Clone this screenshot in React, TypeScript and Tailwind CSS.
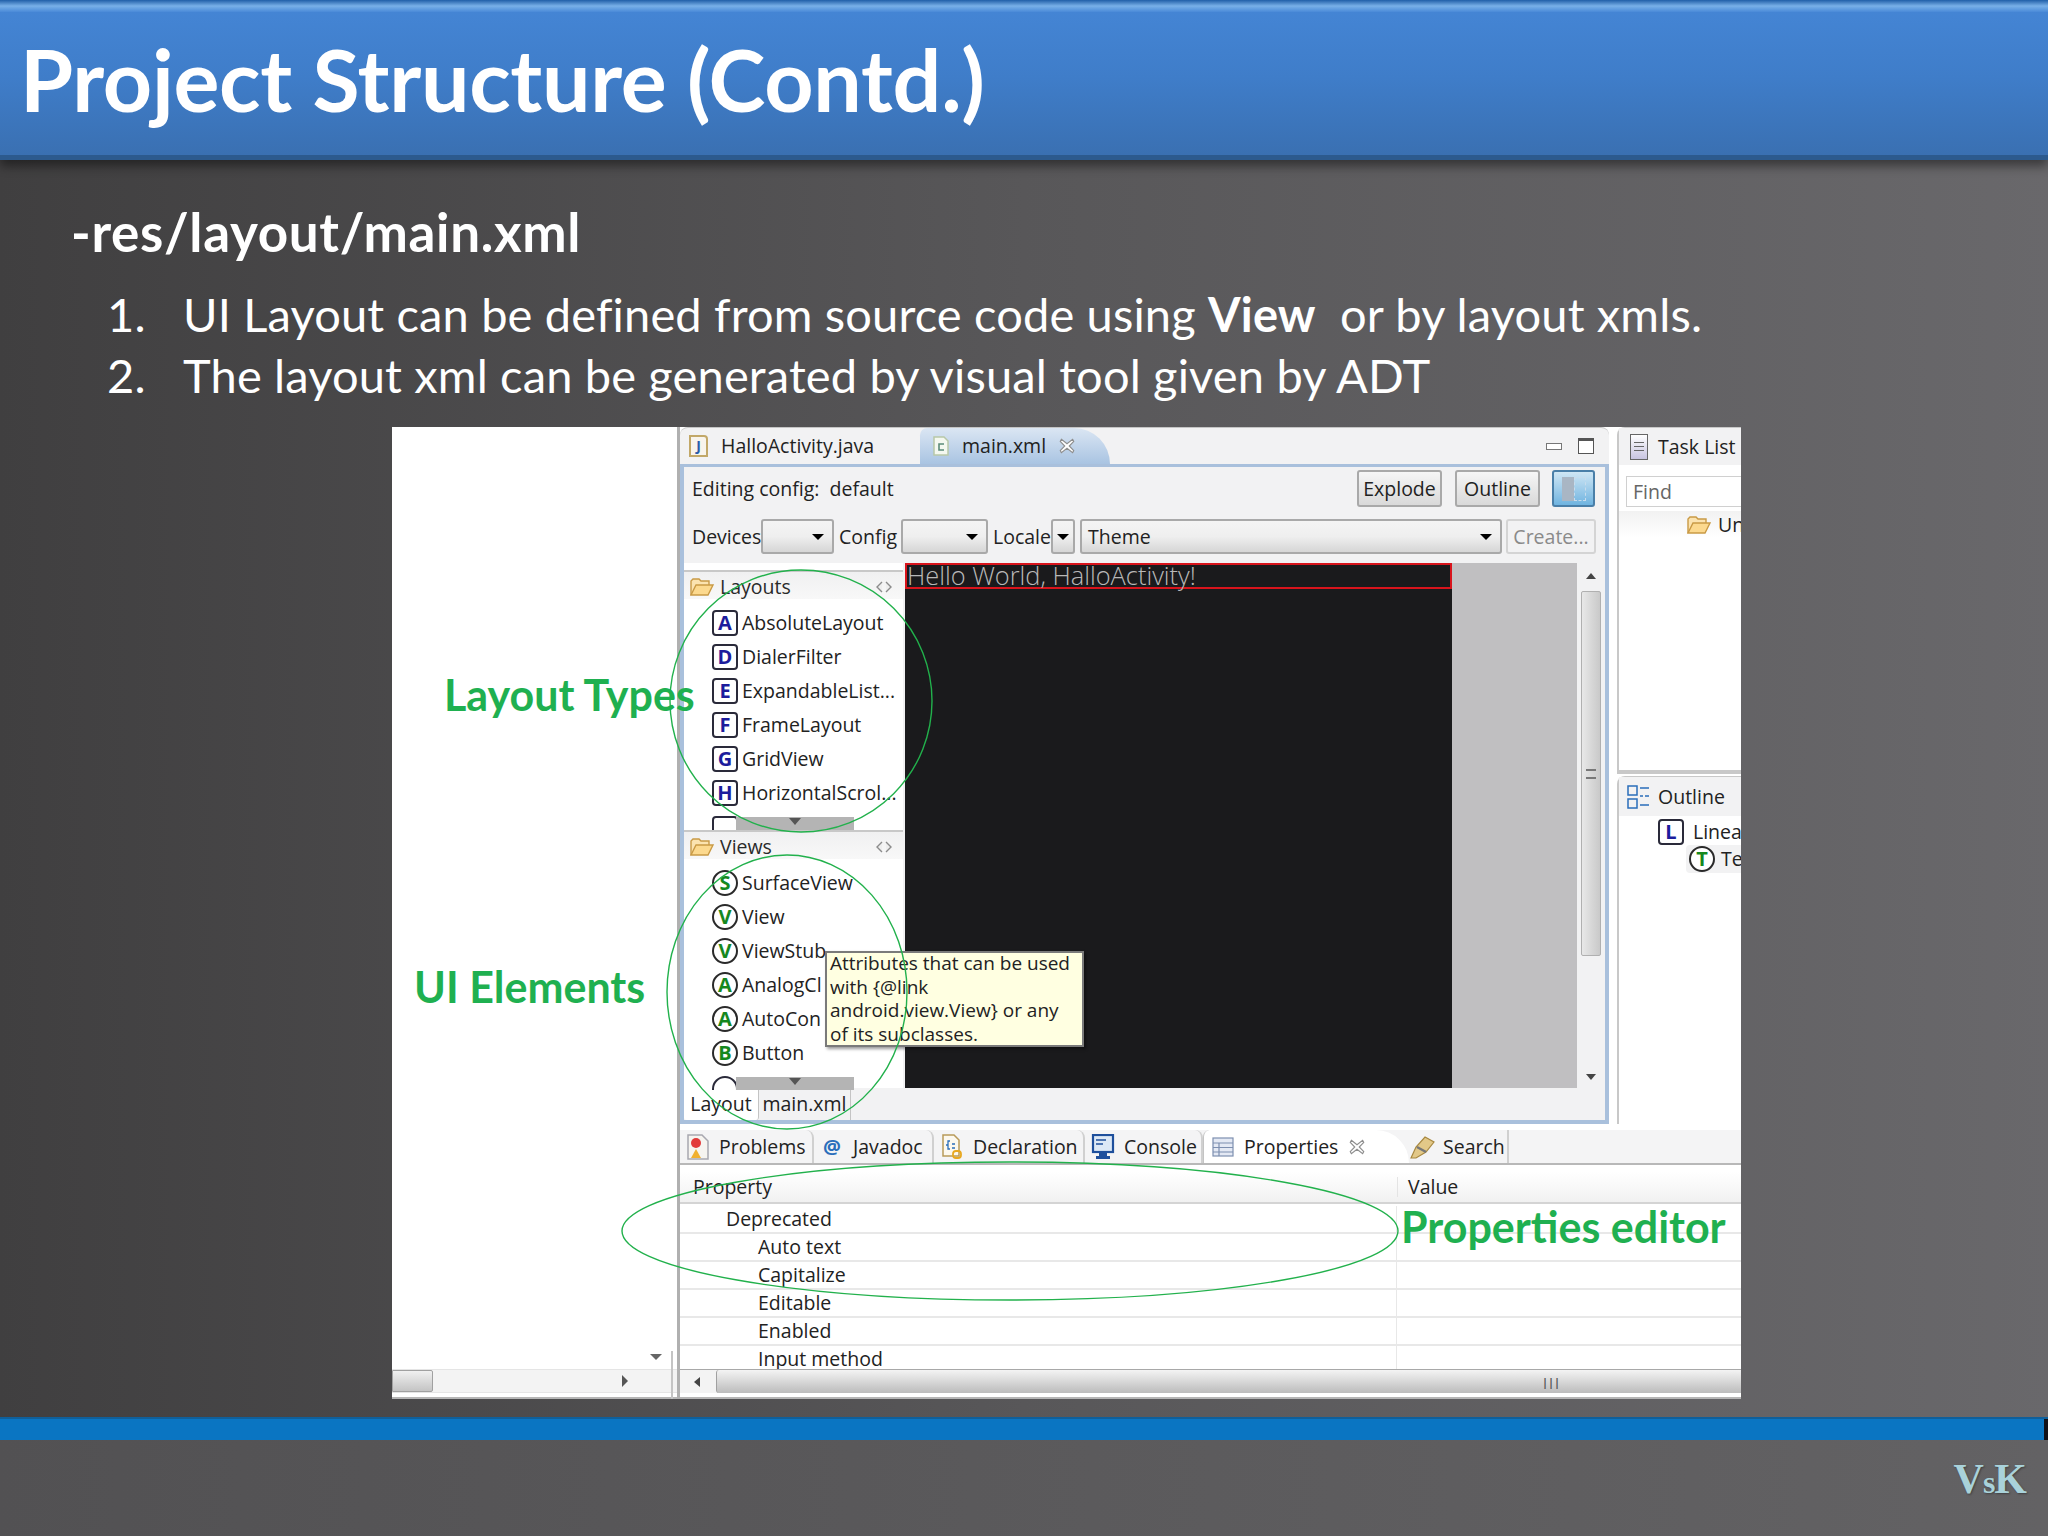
import type { ReactNode } from 'react';

const layoutItems = [
    ['A', 'AbsoluteLayout'],
    ['D', 'DialerFilter'],
    ['E', 'ExpandableList...'],
    ['F', 'FrameLayout'],
    ['G', 'GridView'],
    ['H', 'HorizontalScrol...'],
];

const viewItems = [
    ['S', 'SurfaceView'],
    ['V', 'View'],
    ['V', 'ViewStub'],
    ['A', 'AnalogCl'],
    ['A', 'AutoCon'],
    ['B', 'Button'],
];

const propertyRows = [
    ['Deprecated', 'pl-[46px]'],
    ['Auto text', 'pl-[78px]'],
    ['Capitalize', 'pl-[78px]'],
    ['Editable', 'pl-[78px]'],
    ['Enabled', 'pl-[78px]'],
    ['Input method', 'pl-[78px]'],
];

function FolderIcon() {
    return (
        <svg width="26" height="20" viewBox="0 0 26 20" className="shrink-0">
            <path d="M2 18V4l2-2h6l2 2h8v4" fill="#fbe3b0" stroke="#c99a45" strokeWidth="1.4" />
            <path d="M2 18l5-10h17l-5 10z" fill="#fcd98e" stroke="#c99a45" strokeWidth="1.4" />
        </svg>
    );
}

function ArrowsIcon() {
    return (
        <svg width="18" height="14" viewBox="0 0 18 14" className="ml-auto mr-[10px] shrink-0">
            <path d="M7 2L2 7l5 5M11 2l5 5-5 5" fill="#eee" stroke="#8b8b8b" strokeWidth="1.4" />
        </svg>
    );
}

function JavaIcon() {
    return (
        <span className="flex h-[22px] w-[19px] shrink-0 items-center justify-center rounded-tr-[4px] border-2 border-[#c2a868] bg-[#f8f4ec] text-[14px] font-bold leading-none text-[#2a5ca8]">
            J
        </span>
    );
}

function XmlIcon() {
    return (
        <svg width="18" height="20" viewBox="0 0 18 20" className="shrink-0" fill="none">
            <path d="M2 1h10l4 4v14H2z" stroke="#b8c8a8" strokeWidth="1.5" fill="#f4f8f0" />
            <path d="M12 8H7v6h5" stroke="#5a8a78" strokeWidth="1.6" />
        </svg>
    );
}

function CloseIcon() {
    return (
        <svg width="18" height="18" viewBox="0 0 16 16" className="shrink-0">
            <path d="M3 2l5 4 5-4 1 2-4 4 4 4-1 2-5-4-5 4-1-2 4-4-4-4z" fill="#fff" stroke="#8e8e8e" strokeWidth="1" />
        </svg>
    );
}

function SquareBadge({ letter }: { letter: string }) {
    return (
        <span className="flex h-[26px] w-[26px] shrink-0 items-center justify-center rounded-[4px] border-2 border-[#2a2a3a] bg-white text-[20px] font-bold leading-none text-[#1c1c9c]">
            {letter}
        </span>
    );
}

function CircleBadge({ letter }: { letter: string }) {
    return (
        <span className="flex h-[26px] w-[26px] shrink-0 items-center justify-center rounded-full border-2 border-[#2a2a2a] bg-white text-[20px] font-bold leading-none text-[#16881e]">
            {letter}
        </span>
    );
}

function PaletteHeader({ label }: { label: string }) {
    return (
        <div className="flex h-[29px] shrink-0 items-center gap-[5px] border-t-2 border-[#c8c8c8] bg-gradient-to-b from-[#f0f0f1] to-[#f8f8f8] pl-[5px] pt-[2px]">
            <FolderIcon />
            <span className="text-[#2a2a2a]">{label}</span>
            <ArrowsIcon />
        </div>
    );
}

function PaletteList({ items, badge }: { items: string[][]; badge: 'square' | 'circle' }) {
    return (
        <div className="flex flex-col pt-[7px]">
            {items.map(([letter, name]) => (
                <div key={name} className="flex h-[34px] shrink-0 items-center gap-[4px] pl-[28px]">
                    {badge === 'square' ? <SquareBadge letter={letter} /> : <CircleBadge letter={letter} />}
                    <span className="whitespace-nowrap text-[#222]">{name}</span>
                </div>
            ))}
        </div>
    );
}

function CutRow({ circle }: { circle?: boolean }) {
    return (
        <div className="relative h-[20px] shrink-0 overflow-hidden pl-[28px]">
            <span className={`mt-[6px] block h-[26px] w-[26px] border-2 border-[#2a2a3a] bg-white ${circle ? 'rounded-full' : 'rounded-[4px]'}`} />
            <span className="absolute left-[52px] top-[7px] flex h-[13px] w-[118px] justify-center bg-[#b4b4b4]">
                <span className="mt-[1px] h-0 w-0 border-x-[6px] border-t-[7px] border-x-transparent border-t-[#555]" />
            </span>
        </div>
    );
}

function Combo({ className, children }: { className: string; children?: ReactNode }) {
    return (
        <div className={`flex h-[35px] shrink-0 items-center justify-between rounded-[3px] border-2 border-[#a9a9a9] bg-gradient-to-b from-[#f4f4f4] via-[#efefef] to-[#d6d6d6] pl-[6px] pr-[8px] ${className}`}>
            <span>{children}</span>
            <span className="h-0 w-0 border-x-[6px] border-t-[6px] border-x-transparent border-t-black" />
        </div>
    );
}

function ToolButton({ label, className }: { label: string; className: string }) {
    return (
        <div className={`flex h-[37px] items-center justify-center rounded-[3px] border-2 border-[#a9a9a9] bg-gradient-to-b from-[#f6f6f6] to-[#d9d9d9] ${className}`}>
            {label}
        </div>
    );
}

function BottomTab({ label, icon, className }: { label: string; icon: ReactNode; className: string }) {
    return (
        <div className={`flex h-full shrink-0 items-center gap-[9px] rounded-t-[8px] border-r-2 border-[#d0d0d0] pl-[6px] ${className}`}>
            <span className="flex w-[24px] shrink-0 justify-center">{icon}</span>
            <span>{label}</span>
        </div>
    );
}

function Annotations() {
    return (
        <svg width="1345" height="972" className="pointer-events-none absolute left-0 top-0" fill="none" stroke="#22b14c" strokeWidth="1.4">
            <ellipse cx="409" cy="274" rx="131" ry="131" />
            <ellipse cx="395" cy="565" rx="120" ry="137" />
            <ellipse cx="618" cy="804" rx="388" ry="69" />
        </svg>
    );
}

function GreenLabel({ className, children }: { className: string; children: ReactNode }) {
    return (
        <span className={`absolute whitespace-nowrap font-['Lato',sans-serif] text-[43px] font-bold leading-none text-[#1fb050] ${className}`}>
            {children}
        </span>
    );
}

export default function App() {
    return (
        <div className="relative flex h-[1536px] w-[2048px] flex-col overflow-hidden bg-gradient-to-r from-[#403f40] via-[#585759] to-[#69686b] font-['Lato',sans-serif] text-white">
            <header className="relative flex h-[160px] shrink-0 items-center border-b-[5px] border-[#2c5a8e] bg-gradient-to-b from-[#4586d6] via-[#3f7dc9] to-[#3a70b2] pl-[20px] pt-[2px] shadow-[0_6px_10px_rgba(0,0,0,0.45)]">
                <div className="absolute left-0 top-0 h-[12px] w-full bg-gradient-to-b from-[#1f5fa8] via-[#78b0e8] to-[#4a8ad8]" />
                <h1 className="whitespace-nowrap text-[86px] font-bold leading-none tracking-[-0.3px]">Project Structure (Contd.)</h1>
            </header>

            <section className="flex flex-1 flex-col pl-[71px] pt-[42px]">
                <div className="whitespace-nowrap text-[53px] font-bold leading-[60px] tracking-[0.65px]">-res/layout/main.xml</div>
                <ol className="mt-[27px] flex flex-col gap-[10px] pl-[36px] text-[47px] leading-[51px] tracking-[0.15px]">
                    <li className="flex whitespace-nowrap">
                        <span className="w-[76px]">1.</span>
                        <span>UI Layout can be defined from source code using <b>View</b>&nbsp; or by layout xmls.</span>
                    </li>
                    <li className="flex whitespace-nowrap">
                        <span className="w-[76px]">2.</span>
                        <span>The layout xml can be generated by visual tool given by ADT</span>
                    </li>
                </ol>

                <div className="relative ml-[321px] mt-[26px] flex h-[972px] w-[1349px] overflow-hidden bg-white font-['Open_Sans',sans-serif] text-[19.5px] leading-none text-[#222]">
                    <div className="relative flex w-[285px] shrink-0 flex-col justify-end">
                        <div className="flex h-[24px] justify-between border-y border-[#e5e5e5] bg-[#f3f3f3] pr-[49px]">
                            <span className="h-full w-[41px] rounded-r-[2px] border border-[#a0a0a0] bg-gradient-to-b from-[#f0f0f0] to-[#c4c4c4]" />
                            <span className="mt-[5px] h-0 w-0 border-y-[6px] border-l-[6px] border-y-transparent border-l-[#555]" />
                        </div>
                        <div className="h-[6px] border-b-2 border-[#b5b5b5]" />
                        <span className="absolute bottom-0 right-[4px] h-[48px] w-[2px] bg-[#c4c4c4]" />
                    </div>

                    <div className="flex flex-1 flex-col border-l-[3px] border-[#b0b0b0]">
                        <div className="flex h-[697px] shrink-0">
                            <div className="flex w-[929px] shrink-0 flex-col">
                                <div className="flex h-[37px] shrink-0 items-center rounded-t-[8px] border-t border-[#c4c4c4] bg-[#f2f2f3]">
                                    <div className="flex h-full w-[240px] items-center gap-[13px] pl-[9px]">
                                        <JavaIcon />
                                        <span>HalloActivity.java</span>
                                    </div>
                                    <div className="flex h-full w-[190px] items-center gap-[12px] rounded-tl-[8px] rounded-tr-[40px] bg-gradient-to-b from-[#dbe6f3] to-[#a9c4e2] pl-[12px]">
                                        <XmlIcon />
                                        <span>main.xml</span>
                                        <CloseIcon />
                                    </div>
                                    <span className="ml-auto h-[7px] w-[16px] border border-[#777] bg-white" />
                                    <span className="ml-[16px] mr-[15px] h-[16px] w-[16px] border border-[#555] border-t-[3px] bg-white" />
                                </div>

                                <div className="flex flex-1 flex-col overflow-hidden border-x-4 border-b-4 border-t-[3px] border-[#a9c0dc] bg-[#f2f2f3]">
                                    <div className="flex h-[43px] shrink-0 items-center pl-[8px] pr-[10px]">
                                        <span>Editing config:&nbsp; default</span>
                                        <ToolButton label="Explode" className="ml-auto w-[85px]" />
                                        <ToolButton label="Outline" className="ml-[13px] w-[85px]" />
                                        <div className="ml-[12px] flex h-[37px] w-[43px] items-center justify-center rounded-[3px] border-2 border-[#4a7fa8] bg-gradient-to-b from-[#cfe6f4] to-[#6fb4e0]">
                                            <span className="h-[24px] w-[12px] bg-[#a9b6c4]" />
                                            <span className="h-[24px] w-[12px] border border-dashed border-[#c9dcec]" />
                                        </div>
                                    </div>
                                    <div className="flex h-[53px] shrink-0 items-center pl-[8px]">
                                        <span className="w-[69px]">Devices</span>
                                        <Combo className="w-[73px]" />
                                        <span className="ml-[5px] w-[62px]">Config</span>
                                        <Combo className="w-[87px]" />
                                        <span className="ml-[5px] w-[58px]">Locale</span>
                                        <Combo className="w-[24px] !px-[4px]" />
                                        <Combo className="ml-[5px] w-[422px]">Theme</Combo>
                                        <div className="ml-[4px] flex h-[35px] w-[90px] items-center justify-center rounded-[3px] border-2 border-[#d4d4d4] text-[#8a8a8a]">Create...</div>
                                    </div>
                                    <div className="flex min-h-0 flex-1">
                                        <div className="flex w-[219px] shrink-0 flex-col bg-white pt-[7px]">
                                            <PaletteHeader label="Layouts" />
                                            <PaletteList items={layoutItems} badge="square" />
                                            <CutRow />
                                            <PaletteHeader label="Views" />
                                            <PaletteList items={viewItems} badge="circle" />
                                            <CutRow circle />
                                        </div>
                                        <div className="ml-[2px] w-[547px] shrink-0 bg-[#1a1a1c]">
                                            <div className="flex h-[26px] items-center whitespace-nowrap border-2 border-[#d8141c] text-[25.4px] font-light text-[#b8b8b8]">Hello World, HalloActivity!</div>
                                        </div>
                                        <div className="w-[125px] shrink-0 bg-[#c0bfc1]" />
                                        <div className="relative flex w-[27px] shrink-0 flex-col items-center bg-[#f2f2f3] pt-[10px]">
                                            <span className="h-0 w-0 border-x-[5px] border-b-[6px] border-x-transparent border-b-[#444]" />
                                            <div className="mt-[12px] flex h-[365px] w-[20px] items-center justify-center rounded-[2px] border border-[#b0b0b0] bg-gradient-to-r from-[#e8e8e8] to-[#c9c9c9]">
                                                <span className="h-[10px] w-[10px] border-y-2 border-[#777]" />
                                            </div>
                                            <span className="mb-[8px] mt-auto h-0 w-0 border-x-[5px] border-t-[6px] border-x-transparent border-t-[#444]" />
                                        </div>
                                    </div>
                                    <div className="flex h-[32px] shrink-0 bg-[#f2f2f3]">
                                        <div className="flex h-full w-[75px] items-center justify-center rounded-b-[3px] border-r border-[#c4c4c4] bg-white">Layout</div>
                                        <div className="flex h-full w-[92px] items-center justify-center border-r border-[#c4c4c4]">main.xml</div>
                                    </div>
                                </div>
                            </div>

                            <div className="ml-[8px] flex min-w-0 flex-1 flex-col overflow-hidden">
                                <div className="flex h-[347px] shrink-0 flex-col rounded-tl-[8px] border-b-[4px] border-l-2 border-t border-[#c8c8c8]">
                                    <div className="flex h-[37px] shrink-0 items-center gap-[10px] whitespace-nowrap bg-[#f2f2f3] pl-[11px]">
                                        <span className="flex h-[26px] w-[18px] shrink-0 flex-col justify-center gap-[3px] border border-[#666] bg-gradient-to-b from-white to-[#c8c4e0] px-[3px]">
                                            <span className="h-[1px] bg-[#666]" />
                                            <span className="h-[1px] bg-[#666]" />
                                            <span className="h-[1px] bg-[#666]" />
                                        </span>
                                        <span>Task List</span>
                                    </div>
                                    <div className="ml-[7px] mt-[11px] flex h-[31px] items-center border border-r-0 border-[#d0d0d0] pl-[6px] text-[#666]">Find</div>
                                    <div className="mt-[4px] flex h-[27px] items-center gap-[6px] whitespace-nowrap bg-gradient-to-b from-[#f2f2f2] to-white pl-[67px]">
                                        <FolderIcon />
                                        <span>Un</span>
                                    </div>
                                </div>
                                <div className="mt-[2px] flex flex-1 flex-col rounded-tl-[8px] border-l-2 border-t border-[#c8c8c8]">
                                    <div className="flex h-[39px] shrink-0 items-center gap-[7px] whitespace-nowrap bg-[#f2f2f3] pl-[8px]">
                                        <svg width="24" height="24" viewBox="0 0 24 24" className="shrink-0" fill="none" stroke="#2a6ebb" strokeWidth="1.5">
                                            <rect x="1" y="1" width="9" height="9" />
                                            <rect x="1" y="14" width="9" height="9" />
                                            <path d="M13 3h9M13 11h3M18 11h4M13 20h9" />
                                        </svg>
                                        <span>Outline</span>
                                    </div>
                                    <div className="flex h-[29px] items-center gap-[9px] whitespace-nowrap pl-[39px] pt-[2px]">
                                        <SquareBadge letter="L" />
                                        <span>Linea</span>
                                    </div>
                                    <div className="ml-[67px] flex h-[28px] items-center gap-[6px] whitespace-nowrap rounded-l-[4px] bg-[#f2f2f3] pl-[3px]">
                                        <CircleBadge letter="T" />
                                        <span>Te</span>
                                    </div>
                                </div>
                            </div>
                        </div>

                        <div className="mt-[6px] flex min-h-0 flex-1 flex-col">
                            <div className="flex h-[35px] shrink-0 items-center border-b-[2px] border-[#b8b8b8] bg-[#f4f4f5]">
                                <BottomTab
                                    label="Problems"
                                    className="w-[134px]"
                                    icon={
                                        <svg width="22" height="26" viewBox="0 0 22 26" fill="none">
                                            <path d="M1 1h14l6 6v18H1z" fill="#f6f4f0" stroke="#a8a8b0" strokeWidth="1.5" />
                                            <circle cx="9" cy="9" r="5" fill="#e23a3a" />
                                            <path d="M9 15l5 9H4z" fill="#f0b030" />
                                        </svg>
                                    }
                                />
                                <BottomTab label="Javadoc" className="w-[120px]" icon={<span className="text-[20px] font-bold text-[#2a6ebb]">@</span>} />
                                <BottomTab
                                    label="Declaration"
                                    className="w-[151px]"
                                    icon={
                                        <svg width="22" height="26" viewBox="0 0 22 26" fill="none">
                                            <path d="M2 1h11l5 5v16H2z" fill="#fcf8ee" stroke="#b89a5a" strokeWidth="1.5" />
                                            <path d="M9 7H7v4H5m2 0v4h2M11 10h3M11 14h3" stroke="#2a6ebb" strokeWidth="1.3" />
                                            <rect x="12" y="17" width="8" height="7" rx="3" stroke="#e8a820" strokeWidth="1.8" />
                                        </svg>
                                    }
                                />
                                <BottomTab
                                    label="Console"
                                    className="w-[118px]"
                                    icon={
                                        <svg width="24" height="26" viewBox="0 0 24 26">
                                            <rect x="2" y="1" width="20" height="17" fill="#dce8f6" stroke="#1e4f9c" strokeWidth="2.2" />
                                            <path d="M5 6h10M5 10h7" stroke="#1e4f9c" strokeWidth="1.4" />
                                            <path d="M8 19h8v3h3v3H5v-3h3z" fill="#1e4f9c" />
                                        </svg>
                                    }
                                />
                                <div className="flex h-full w-[206px] shrink-0 items-center gap-[10px] rounded-tl-[8px] rounded-tr-[40px] border-l border-[#c4c4c4] bg-white pl-[8px]">
                                    <svg width="22" height="20" viewBox="0 0 22 20" className="shrink-0" fill="#e4e9f4" stroke="#7d8fb0" strokeWidth="1.2">
                                        <rect x="1" y="1" width="20" height="18" />
                                        <path d="M1 6h20M1 10.5h20M1 15h20M7 6v13" />
                                    </svg>
                                    <span>Properties</span>
                                    <CloseIcon />
                                </div>
                                <div className="flex h-full w-[100px] shrink-0 items-center gap-[6px] border-r-2 border-[#d0d0d0]">
                                    <svg width="28" height="26" viewBox="0 0 28 26" className="shrink-0">
                                        <path d="M2 24l5-11 9-10 9 5-8 10-10 6z" fill="#e2c888" stroke="#a88840" strokeWidth="1.2" />
                                        <path d="M8 13l9 5" stroke="#777" strokeWidth="2.4" />
                                    </svg>
                                    <span>Search</span>
                                </div>
                            </div>
                            <div className="mt-[7px] flex min-h-0 flex-1 flex-col">
                                <div className="flex h-[32px] shrink-0 items-center border-b-2 border-[#d4d4d4] bg-gradient-to-b from-white to-[#f1f1f1]">
                                    <span className="w-[717px] pl-[13px]">Property</span>
                                    <span className="border-l border-[#e4e4e4] pl-[10px]">Value</span>
                                </div>
                                <div className="flex-1 overflow-hidden pt-[2px]">
                                    {propertyRows.map(([name, indent]) => (
                                        <div key={name} className="flex h-[28px] border-b-2 border-[#e8e8e8]">
                                            <span className={`flex w-[717px] items-center whitespace-nowrap border-r border-[#e8e8e8] ${indent}`}>{name}</span>
                                        </div>
                                    ))}
                                </div>
                                <div className="flex h-[24px] shrink-0 items-center border-t border-[#a8a8a8] bg-[#f3f3f3]">
                                    <span className="ml-[14px] mr-[16px] h-0 w-0 border-y-[5px] border-r-[6px] border-y-transparent border-r-[#444]" />
                                    <span className="flex h-full flex-1 items-center justify-end rounded-l-[3px] border-l border-[#a0a0a0] bg-gradient-to-b from-[#f4f4f4] via-[#d8d8d8] to-[#bcbcbc] pr-[184px] text-[11px] font-bold text-[#555]">|||</span>
                                </div>
                                <div className="h-[6px] shrink-0 border-b-2 border-[#b5b5b5]" />
                            </div>
                        </div>
                    </div>

                    <span className="absolute left-[258px] top-[927px] h-0 w-0 border-x-[6px] border-t-[6px] border-x-transparent border-t-[#666]" />

                    <div className="absolute left-[433px] top-[524px] flex h-[96px] w-[259px] flex-col justify-center whitespace-nowrap border-2 border-[#7a7a7a] bg-[#ffffe1] pl-[3px] text-[19px] leading-[23.5px] text-[#222] shadow-[2px_2px_3px_rgba(0,0,0,0.4)]">
                        <span>Attributes that can be used</span>
                        <span>with {'{@link'}</span>
                        <span>android.view.View{'}'} or any</span>
                        <span>of its subclasses.</span>
                    </div>

                    <Annotations />
                    <GreenLabel className="left-[52px] top-[246px]">Layout Types</GreenLabel>
                    <GreenLabel className="left-[22px] top-[538px]">UI Elements</GreenLabel>
                    <GreenLabel className="left-[1009px] top-[778px]">Properties editor</GreenLabel>
                </div>
            </section>

            <div className="flex h-[23px] shrink-0 border-t-2 border-[#0f5f9a] bg-[#0a75c2]">
                <span className="ml-auto h-full w-[4px] bg-[#101018]" />
            </div>
            <footer className="flex h-[96px] shrink-0 justify-end bg-gradient-to-r from-[#525153] to-[#636264] pr-[22px] pt-[18px]">
                <span className="font-['Liberation_Serif',serif] text-[42px] font-bold leading-none tracking-[-1px] text-[#a9d2da] [text-shadow:1px_1px_2px_rgba(0,0,0,0.35)]">
                    V<span className="text-[32px]">s</span>K
                </span>
            </footer>
        </div>
    );
}
